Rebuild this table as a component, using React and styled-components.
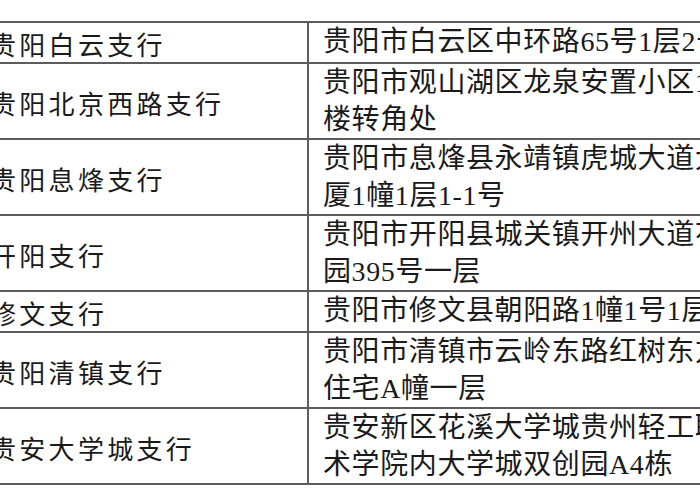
import React from "react";
import styled, { createGlobalStyle } from "styled-components";

const branches = [
  { name: "贵阳白云支行", address: ["贵阳市白云区中环路65号1层2号"] },
  { name: "贵阳北京西路支行", address: ["贵阳市观山湖区龙泉安置小区1号", "楼转角处"] },
  { name: "贵阳息烽支行", address: ["贵阳市息烽县永靖镇虎城大道大", "厦1幢1层1-1号"] },
  { name: "开阳支行", address: ["贵阳市开阳县城关镇开州大道花", "园395号一层"] },
  { name: "修文支行", address: ["贵阳市修文县朝阳路1幢1号1层"] },
  { name: "贵阳清镇支行", address: ["贵阳市清镇市云岭东路红树东方", "住宅A幢一层"] },
  { name: "贵安大学城支行", address: ["贵安新区花溪大学城贵州轻工职业技", "术学院内大学城双创园A4栋"] },
];

const GlobalStyle = createGlobalStyle`
  html, body {
    margin: 0;
    padding: 0;
    background: #fff;
    overflow: hidden;
  }
  body {
    width: 700px;
    height: 500px;
  }
`;

const App = () => {
  return (
    <>
      <GlobalStyle />
      <Page>
        <Table>
          {branches.map((b) => (
            <React.Fragment key={b.name}>
              <NameCell>{b.name}</NameCell>
              <AddressCell>
                {b.address.map((line) => (
                  <Line key={line}>{line}</Line>
                ))}
              </AddressCell>
            </React.Fragment>
          ))}
        </Table>
      </Page>
    </>
  );
};

const Page = styled.div`
  width: 700px;
  height: 500px;
  overflow: hidden;
  padding-top: 21px;
  box-sizing: border-box;
`;

const Table = styled.div`
  display: grid;
  grid-template-columns: 317px 560px;
  margin-left: -10px;
  width: max-content;
  border-top: 2px solid #5c5c5c;
`;

const NameCell = styled.div`
  display: flex;
  align-items: center;
  padding-top: 2px;
  border-bottom: 2px solid #5c5c5c;
  font-family: "Noto Sans CJK SC", sans-serif;
  font-size: 26px;
  letter-spacing: 3.3px;
  color: #1a1a1a;
  white-space: nowrap;
`;

const AddressCell = styled.div`
  border-left: 2px solid #5c5c5c;
  border-bottom: 2px solid #5c5c5c;
  padding-left: 14px;
  font-family: "Liberation Serif", "Noto Sans CJK SC", serif;
  font-size: 28px;
  letter-spacing: 0.6px;
  color: #1a1a1a;
`;

const Line = styled.div`
  height: 37px;
  line-height: 37px;
  white-space: nowrap;
`;

export default App;
